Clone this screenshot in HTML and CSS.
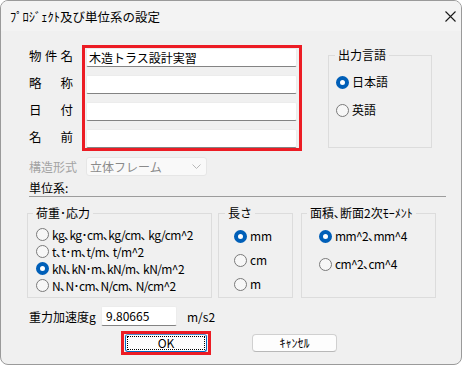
FILE: index.html
```html
<!DOCTYPE html>
<html lang="ja">
<head>
<meta charset="utf-8">
<title>ﾌﾟﾛｼﾞｪｸﾄ及び単位系の設定</title>
<link rel="stylesheet" href="styles.css">
</head>
<body>
<div class="window">
  <div class="titlebar">
    <span class="title">ﾌﾟﾛｼﾞｪｸﾄ及び単位系の設定</span>
    <svg class="close" width="11" height="11" viewBox="0 0 11 11"><path d="M0.5 0.5 L10.5 10.5 M10.5 0.5 L0.5 10.5" stroke="#1a1a1a" stroke-width="1.1" fill="none"/></svg>
  </div>
  <div class="content">
    <div class="top">
      <div class="labels">
        <div class="lbl"><span>物</span><span>件</span><span>名</span></div>
        <div class="lbl"><span>略</span><span>称</span></div>
        <div class="lbl"><span>日</span><span>付</span></div>
        <div class="lbl"><span>名</span><span>前</span></div>
      </div>
      <div class="hl fields">
        <div class="tb">木造トラス設計実習</div>
        <div class="tb"></div>
        <div class="tb"></div>
        <div class="tb"></div>
      </div>
      <fieldset class="grp lang">
        <legend>出力言語</legend>
        <div class="opts lang-opts">
          <div class="opt"><span class="radio on"></span>日本語</div>
          <div class="opt"><span class="radio"></span>英語</div>
        </div>
      </fieldset>
    </div>
    <div class="struct">
      <span class="struct-lbl">構造形式</span>
      <div class="combo"><span>立体フレーム</span>
        <svg class="chev" width="9" height="5" viewBox="0 0 9 5"><path d="M0.5 0.5 L4.5 4.5 L8.5 0.5" stroke="#b8b8b8" fill="none"/></svg>
      </div>
    </div>
    <div class="unit-head">単位系:</div>
    <div class="groups">
      <fieldset class="grp load">
        <legend>荷重･応力</legend>
        <div class="opts load-opts">
          <div class="opt"><span class="radio"></span>kg､kg･cm､kg/cm､ kg/cm^2</div>
          <div class="opt"><span class="radio"></span>t､t･m､t/m､ t/m^2</div>
          <div class="opt"><span class="radio on"></span>kN､kN･m､kN/m､ kN/m^2</div>
          <div class="opt"><span class="radio"></span>N､N･cm､N/cm､ N/cm^2</div>
        </div>
      </fieldset>
      <fieldset class="grp len">
        <legend>長さ</legend>
        <div class="opts len-opts">
          <div class="opt"><span class="radio on"></span>mm</div>
          <div class="opt"><span class="radio"></span>cm</div>
          <div class="opt"><span class="radio"></span>m</div>
        </div>
      </fieldset>
      <fieldset class="grp area">
        <legend>面積､断面2次ﾓｰﾒﾝﾄ</legend>
        <div class="opts area-opts">
          <div class="opt"><span class="radio on"></span>mm^2､mm^4</div>
          <div class="opt"><span class="radio"></span>cm^2､cm^4</div>
        </div>
      </fieldset>
    </div>
    <div class="gravity">
      <span class="grav-lbl">重力加速度g</span>
      <div class="tb grav-tb">9.80665</div>
      <span class="unit">m/s2</span>
    </div>
    <div class="buttons">
      <div class="hl ok-wrap"><div class="btn ok">OK</div></div>
      <div class="btn cancel">ｷｬﾝｾﾙ</div>
    </div>
  </div>
</div>
</body>
</html>
```

FILE: styles.css
```css
* { box-sizing: border-box; }
html, body { margin: 0; padding: 0; background: #ffffff; }
body {
  font-family: "Noto Sans CJK JP", "Noto Sans", sans-serif;
  font-size: 12px;
  color: #000;
}
.window {
  width: 462px;
  height: 365px;
  border: 1px solid #9a9a9a;
  border-radius: 8px;
  background: #f0f0f0;
  overflow: hidden;
}
.titlebar {
  height: 30px;
  background: #f3f3f3;
  display: flex;
  align-items: center;
  justify-content: space-between;
  padding: 0 5px 0 9px;
}
.title { font-size: 12.5px; line-height: 14px; margin-top: 1px; }
.close { display: block; margin-top: 1px; }
.content { padding: 14px 0 0 28px; }

.top { display: flex; align-items: flex-start; }
.labels {
  width: 44px;
  margin-top: 1px;
  display: flex;
  flex-direction: column;
  gap: 8px;
}
.lbl {
  height: 19px;
  line-height: 19px;
  display: flex;
  justify-content: space-between;
  font-size: 12.5px;
}
.hl { border: 3px solid #ec1c24; }
.fields {
  margin-left: 9px;
  width: 220px;
  padding: 0 2px 0 1px;
  display: flex;
  flex-direction: column;
  gap: 8px;
}
.tb {
  height: 19px;
  background: #fff;
  border: 1px solid #ececec;
  border-bottom: 1px solid #838383;
  border-radius: 2px;
  line-height: 17px;
  padding-left: 2px;
  font-size: 12px;
  white-space: nowrap;
}

.grp {
  margin: 0;
  padding: 0;
  border: 1px solid #dcdcdc;
  min-width: 0;
}
.grp legend {
  padding: 0 3px;
  margin-left: 6px;
  font-size: 12px;
  line-height: 14px;
}
.lang {
  margin-left: 26px;
  margin-top: 3px;
  width: 104px;
  height: 100px;
}
.opts { display: flex; flex-direction: column; }
.opt {
  display: flex;
  align-items: center;
  height: 14px;
  line-height: 14px;
  white-space: nowrap;
}
.radio {
  width: 13px;
  height: 13px;
  border-radius: 50%;
  border: 1px solid #7a7a7a;
  background: #f7f7f7;
  margin-right: 3px;
  flex: none;
}
.radio.on {
  border: 4px solid #005fb8;
  background: #ffffff;
}
.lang-opts { padding: 13px 0 0 7px; gap: 14px; }

.struct {
  margin-top: 6px;
  display: flex;
  align-items: center;
}
.struct-lbl { width: 57px; color: #a3a3a3; line-height: 19px; }
.combo {
  width: 121px;
  height: 19px;
  background: #f9f9f9;
  border: 1px solid #e6e6e6;
  border-radius: 3px;
  display: flex;
  align-items: center;
  justify-content: space-between;
  padding: 0 5px 0 3px;
  color: #8a8a8a;
  line-height: 17px;
}
.chev { display: block; }

.unit-head {
  margin-top: 5px;
  width: 417px;
  line-height: 14px;
  border-bottom: 1px solid #9c9c9c;
  padding-bottom: 1px;
}

.groups {
  margin-top: 9px;
  margin-left: -2px;
  display: flex;
  align-items: flex-start;
}
.groups .grp { height: 92px; }
.load { width: 185px; }
.load legend { margin-left: 5px; }
.load-opts { padding: 6px 0 0 8px; letter-spacing: -0.6px; }
.load-opts .opt { height: 17px; }
.len { width: 75px; margin-left: 6px; }
.len-opts { padding: 9px 0 0 15px; gap: 10px; }
.area { width: 135px; margin-left: 8px; }
.area legend { margin-left: 5px; }
.area-opts { padding: 9px 0 0 17px; gap: 14px; letter-spacing: -0.6px; }

.gravity {
  margin-top: 8px;
  display: flex;
  align-items: center;
}
.grav-lbl { width: 72px; }
.grav-tb { width: 76px; height: 20px; line-height: 18px; padding-left: 4px; }
.unit { margin-left: 10px; }

.buttons {
  margin-top: 5px;
  display: flex;
  align-items: center;
}
.ok-wrap { margin-left: 92px; padding: 0 1px; }
.btn {
  height: 18px;
  line-height: 16px;
  text-align: center;
  font-size: 12px;
  background: #fdfdfd;
  border-radius: 3px;
}
.ok {
  width: 82px;
  border: 1px solid #0067c0;
  border-top-color: #4a8fd0;
  position: relative;
}
.ok::after {
  content: "";
  position: absolute;
  inset: 1px;
  border: 1px dotted #000;
}
.cancel {
  width: 85px;
  margin-left: 41px;
  border: 1px solid #d0d0d0;
  border-bottom-color: #b8b8b8;
  border-radius: 4px;
}
```
